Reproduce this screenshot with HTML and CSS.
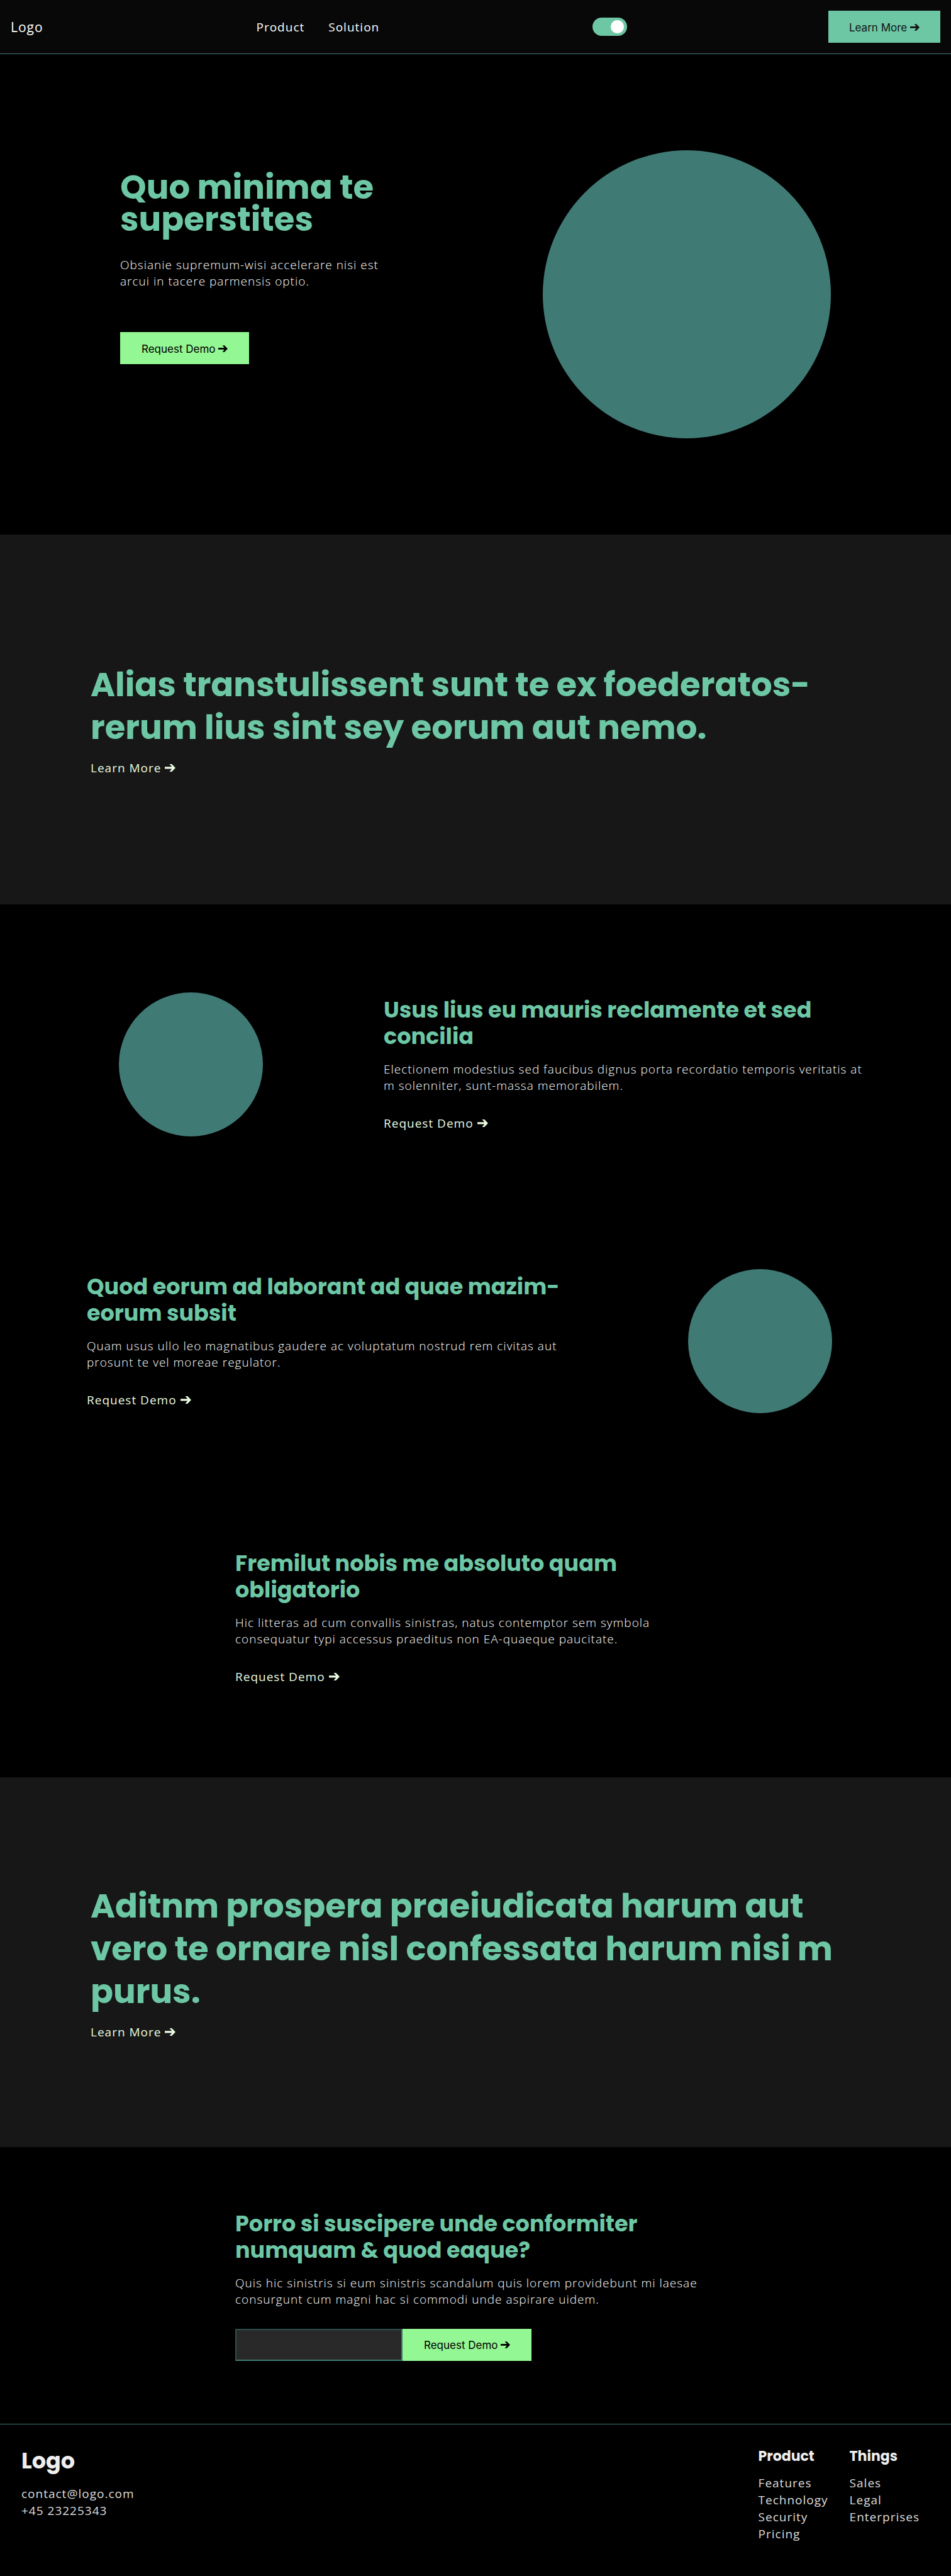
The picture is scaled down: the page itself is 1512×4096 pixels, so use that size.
FILE: index.html
```html
<!DOCTYPE html>
<html lang="en">
<head>
<meta charset="utf-8">
<meta name="viewport" content="width=device-width, initial-scale=1">
<title>Logo</title>
<link rel="stylesheet" href="styles.css">
</head>
<body>
<svg class="sprite" aria-hidden="true"><symbol id="arrow" viewBox="0 0 82 58"><path d="M0 21h54L36 0h18l28 29-28 29H36l18-22H0z"/></symbol></svg>
<header class="nav">
  <a class="nav-logo" href="#">Logo</a>
  <nav class="nav-menu">
    <a href="#product">Product</a>
    <a href="#solution">Solution</a>
  </nav>
  <input class="toggle" type="checkbox" role="switch" aria-label="Dark mode" checked>
  <button class="btn btn-nav" type="button">Learn More <svg class="arrow"><use href="#arrow"/></svg></button>
</header>
<main>
  <section class="hero">
    <div class="hero-text">
      <h1>Quo minima te<br>superstites</h1>
      <p>Obsianie supremum-wisi accelerare nisi est<br>arcui in tacere parmensis optio.</p>
      <button class="btn" type="button">Request Demo <svg class="arrow"><use href="#arrow"/></svg></button>
    </div>
    <div class="disc disc-large"></div>
  </section>
  <section class="quote">
    <h2>Alias transtulissent sunt te ex foederatos-<br>rerum lius sint sey eorum aut nemo.</h2>
    <a class="more" href="#product">Learn More <svg class="arrow"><use href="#arrow"/></svg></a>
  </section>
  <section class="features" id="product">
    <article class="feature">
      <div class="disc"></div>
      <div class="feature-text">
        <h3>Usus lius eu mauris reclamente et sed<br>concilia</h3>
        <p>Electionem modestius sed faucibus dignus porta recordatio temporis veritatis at<br>m solenniter, sunt-massa memorabilem.</p>
        <a class="more" href="#demo">Request Demo <svg class="arrow"><use href="#arrow"/></svg></a>
      </div>
    </article>
    <article class="feature">
      <div class="feature-text">
        <h3>Quod eorum ad laborant ad quae mazim-<br>eorum subsit</h3>
        <p>Quam usus ullo leo magnatibus gaudere ac voluptatum nostrud rem civitas aut<br>prosunt te vel moreae regulator.</p>
        <a class="more" href="#demo">Request Demo <svg class="arrow"><use href="#arrow"/></svg></a>
      </div>
      <div class="disc"></div>
    </article>
    <article class="feature feature-single">
      <div class="feature-text">
        <h3>Fremilut nobis me absoluto quam<br>obligatorio</h3>
        <p>Hic litteras ad cum convallis sinistras, natus contemptor sem symbola<br>consequatur typi accessus praeditus non EA-quaeque paucitate.</p>
        <a class="more" href="#demo">Request Demo <svg class="arrow"><use href="#arrow"/></svg></a>
      </div>
    </article>
  </section>
  <section class="quote" id="solution">
    <h2>Aditnm prospera praeiudicata harum aut<br>vero te ornare nisl confessata harum nisi m<br>purus.</h2>
    <a class="more" href="#product">Learn More <svg class="arrow"><use href="#arrow"/></svg></a>
  </section>
  <section class="feature feature-single" id="demo">
    <div class="feature-text">
      <h3>Porro si suscipere unde conformiter<br>numquam &amp; quod eaque?</h3>
      <p>Quis hic sinistris si eum sinistris scandalum quis lorem providebunt mi laesae<br>consurgunt cum magni hac si commodi unde aspirare uidem.</p>
      <form class="demo-form">
        <input class="field" type="email" aria-label="Email">
        <button class="btn" type="button">Request Demo <svg class="arrow"><use href="#arrow"/></svg></button>
      </form>
    </div>
  </section>
</main>
<footer class="footer">
  <div class="contact">
    <h3>Logo</h3>
    <a href="mailto:contact@logo.com">contact@logo.com</a>
    <a href="tel:+4523225343">+45 23225343</a>
  </div>
  <div class="column">
    <h4>Product</h4>
    <a href="#">Features</a>
    <a href="#">Technology</a>
    <a href="#">Security</a>
    <a href="#">Pricing</a>
  </div>
  <div class="column">
    <h4>Things</h4>
    <a href="#">Sales</a>
    <a href="#">Legal</a>
    <a href="#">Enterprises</a>
  </div>
</footer>
</body>
</html>
```
FILE: styles.css
```css
:root {
  --mint: #6dc7a5;
  --teal: #407a75;
  --teal-dark: #2b514e;
  --lime: #93f793;
  --pale: #e9fae0;
}

* { box-sizing: border-box; }

body {
  margin: 0;
  background: #000;
  color: #fff;
  font: 400 19px/26px "Open Sans", sans-serif;
  letter-spacing: 1px;
}

h1, h2, h3, h4, p { margin: 0; }

h1, h2, h3, h4 {
  font-family: Poppins, Inter, sans-serif;
  font-weight: 700;
  letter-spacing: normal;
  color: var(--mint);
}

h1 { font-size: 53px; line-height: 51px; }
h2 { font-size: 53px; line-height: 68px; }
h3 { font-size: 35px; line-height: 42px; }
h4 { font-size: 22px; line-height: 34px; }
p { font-weight: 300; }
a { color: inherit; text-decoration: none; }

.sprite { display: none; }

.arrow {
  width: 17px;
  height: 12px;
  fill: currentColor;
  vertical-align: 1px;
}

.nav {
  display: flex;
  align-items: center;
  justify-content: space-between;
  padding: 17px;
  background: #080808;
  border-bottom: 1px solid var(--teal);
}

.nav-logo { font-size: 21px; }
.nav-menu { display: flex; }
.nav-menu a { padding: 0 19px; }

.toggle {
  appearance: none;
  display: flex;
  width: 55px;
  height: 29px;
  margin: 0;
  padding: 4px 5px;
  border-radius: 15px;
  background: var(--mint);
}

.toggle::before {
  content: "";
  width: 21px;
  height: 21px;
  border-radius: 50%;
  background: #fff;
}

.toggle:checked { justify-content: flex-end; }

.btn {
  height: 51px;
  padding: 2px 34px 0;
  border: 0;
  background: var(--lime);
  color: #000;
  font: 400 17px/20px Inter, sans-serif;
  white-space: nowrap;
}

.btn .arrow { width: 15px; height: 11px; }
.btn-nav { padding: 2px 33px 0; background: var(--mint); color: #111; }

.hero {
  display: flex;
  align-items: center;
  justify-content: space-between;
  min-height: 764px;
  padding: 0 191px;
}

.hero-text { padding-bottom: 85px; }
.hero-text p { margin: 34px 0 68px; }

.disc {
  flex: none;
  width: 229px;
  height: 229px;
  border-radius: 50%;
  background: var(--teal);
}

.disc-large { width: 458px; height: 458px; }

.quote {
  display: flex;
  flex-direction: column;
  align-items: flex-start;
  justify-content: center;
  gap: 17px;
  min-height: 588px;
  padding: 0 144px;
  background: #171717;
}

.more { color: var(--pale); }

.features { padding: 34px 0; }

.feature {
  display: flex;
  align-items: center;
  justify-content: space-between;
  min-height: 440px;
  padding: 0 138px;
}

.feature-single { justify-content: center; }
.feature .disc { margin: 0 51px; }
.feature-text { width: 764px; }
.feature-text p { margin: 18px 0 34px; }

.demo-form { display: flex; }

.field {
  width: 266px;
  height: 51px;
  border: 2px solid;
  border-color: var(--teal-dark) var(--teal) var(--teal) var(--teal-dark);
  background: #292929;
  color: #fff;
  font: inherit;
}

.footer {
  display: flex;
  gap: 34px;
  padding: 34px 50px 52px 34px;
  border-top: 1px solid var(--teal);
  color: #ddd;
  line-height: 27px;
}

.footer h3, .footer h4 { color: #eee; }
.footer h3 { margin-bottom: 15px; line-height: 48px; }
.footer h4 { margin-bottom: 12px; }
.contact { margin-right: auto; }
.contact, .column { display: flex; flex-direction: column; }
```
